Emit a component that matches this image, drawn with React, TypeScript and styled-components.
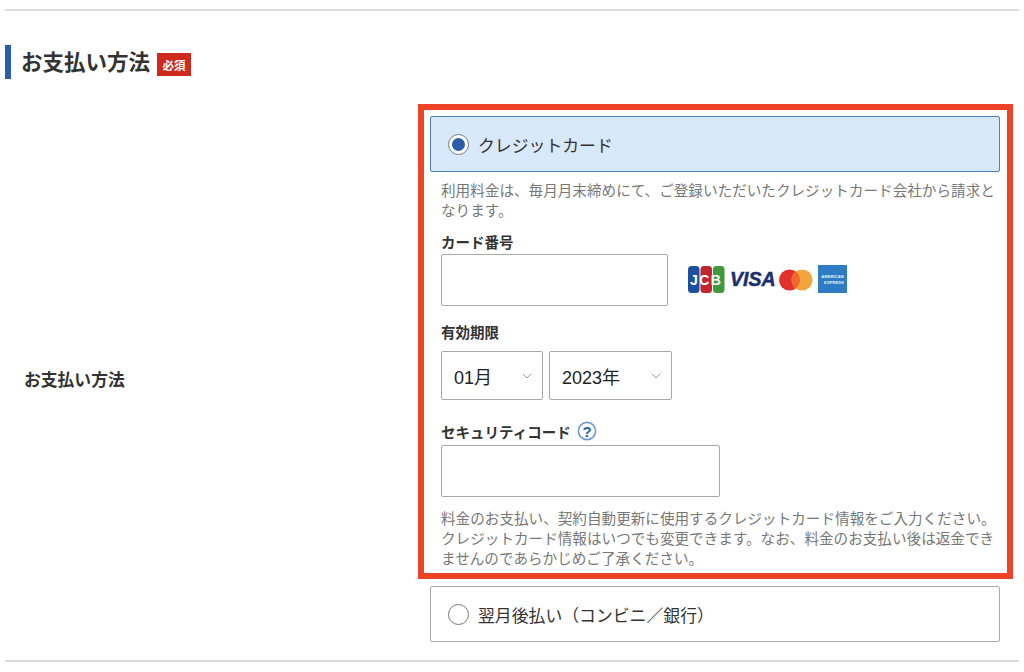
import styled, { createGlobalStyle } from "styled-components";
import { ChevronDown } from "lucide-react";

const GlobalStyle = createGlobalStyle`
  html, body {
    margin: 0;
    padding: 0;
    background: #fff;
  }
  body {
    font-family: "Liberation Sans", "Noto Sans CJK JP", sans-serif;
    color: #333;
  }
  * {
    box-sizing: border-box;
  }
`;

const Page = styled.div`
  width: 1024px;
  height: 672px;
  padding: 9px 5px 0;
  overflow: hidden;
`;

const Rule = styled.hr`
  margin: 0;
  border: 0;
  height: 2px;
  background: #dcdcdc;
`;

const Heading = styled.div`
  display: flex;
  align-items: center;
  gap: 7px;
  height: 34px;
  margin-top: 34px;
  padding-left: 10px;
  border-left: 6px solid #2a5ea8;
`;

const Title = styled.h2`
  margin: 0 0 4px;
  font-size: 21.5px;
  font-weight: 700;
  color: #333;
`;

const Required = styled.span`
  display: flex;
  align-items: center;
  justify-content: center;
  width: 34px;
  height: 23px;
  margin-top: 5px;
  background: #cf2a1e;
  color: #fff;
  font-size: 11.5px;
  font-weight: 700;
`;

const FormRow = styled.div`
  display: flex;
  margin-top: 25px;
`;

const RowLabel = styled.div`
  display: flex;
  align-items: center;
  width: 413px;
  padding: 12px 0 0 19px;
  font-size: 16.8px;
  font-weight: 700;
  color: #333;
`;

const Options = styled.div`
  display: flex;
  flex-direction: column;
  width: 595px;
`;

const Highlight = styled.div`
  height: 475px;
  padding: 6px 7px 0 6px;
  border: 6px solid #ee4326;
`;

const OptionCard = styled.div<{ $selected?: boolean }>`
  display: flex;
  align-items: center;
  gap: 9px;
  width: 570px;
  height: 56px;
  padding-left: 17px;
  border: 1px solid ${(p) => (p.$selected ? "#4f7fbe" : "#a9a9a9")};
  border-radius: 2px;
  background: ${(p) => (p.$selected ? "#d9e9fc" : "#fff")};
  font-size: 16.85px;
  color: #333;
`;

const Radio = styled.span<{ $checked?: boolean }>`
  display: flex;
  align-items: center;
  justify-content: center;
  width: 21px;
  height: 21px;
  border: 1.5px solid #777;
  border-radius: 50%;
  background: #fff;

  &::after {
    content: "";
    display: ${(p) => (p.$checked ? "block" : "none")};
    width: 13px;
    height: 13px;
    border-radius: 50%;
    background: #2a5ea8;
  }
`;

const Body = styled.div`
  padding: 9px 0 0 11px;
`;

const Help = styled.p`
  margin: 0;
  width: 560px;
  font-size: 14.6px;
  line-height: 20px;
  color: #777;
`;

const FieldLabel = styled.div<{ $top: number }>`
  display: flex;
  align-items: center;
  gap: 6px;
  height: 20px;
  margin-top: ${(p) => p.$top}px;
  font-size: 14.5px;
  font-weight: 700;
  color: #333;
`;

const CardRow = styled.div`
  display: flex;
  align-items: center;
  gap: 20px;
  margin-top: 3px;
`;

const TextBox = styled.input<{ $width: number }>`
  display: block;
  width: ${(p) => p.$width}px;
  height: 52px;
  border: 1px solid #a9a9a9;
  border-radius: 2px;
  background: #fff;
`;

const DateRow = styled.div`
  display: flex;
  gap: 6px;
  margin-top: 10px;
`;

const SelectBox = styled.div<{ $width: number }>`
  display: flex;
  align-items: center;
  justify-content: space-between;
  width: ${(p) => p.$width}px;
  height: 49px;
  padding: 0 7px 0 12px;
  border: 1px solid #a9a9a9;
  border-radius: 2px;
  font-size: 18px;
  color: #222;
  svg {
    color: #8a8a8a;
  }
`;

const SecurityBox = styled.div`
  margin-top: 4px;
`;

const Note = styled(Help)`
  margin-top: 12px;
`;

const SecondOption = styled(OptionCard)`
  margin: 7px 0 0 12px;
`;

const BottomRule = styled(Rule)`
  margin-top: 18px;
`;

const Brand = styled.svg`
  display: block;
  flex: none;
`;

function CardBrands() {
  return (
    <Brand width="160" height="30" viewBox="0 0 160 30">
      {/* JCB */}
      <rect x="0" y="1" width="11.5" height="27" rx="3.5" fill="#1d4f9e" />
      <rect x="12.5" y="1" width="11.5" height="27" rx="3.5" fill="#c3252f" />
      <rect x="25" y="1" width="11.5" height="27" rx="3.5" fill="#3d9b3c" />
      <text x="18.2" y="20" textAnchor="middle" fontFamily="Liberation Sans" fontWeight="700" fontSize="14" fill="#fff" letterSpacing="1.5">
        JCB
      </text>
      {/* VISA */}
      <text x="42" y="21" fontFamily="Liberation Sans" fontStyle="italic" fontWeight="700" fontSize="19.5" fill="#1c2f6e" stroke="#1c2f6e" strokeWidth="0.5">
        VISA
      </text>
      {/* Mastercard */}
      <circle cx="101.5" cy="15" r="10.5" fill="#e2322b" />
      <circle cx="114" cy="15" r="10.5" fill="#f2a53a" />
      <path d="M107.75 6.6a10.5 10.5 0 0 1 0 16.8a10.5 10.5 0 0 1 0-16.8z" fill="#f0692c" />
      {/* Amex */}
      <rect x="130" y="0" width="29" height="28" fill="#2d7cc4" />
      <text x="144.5" y="13" textAnchor="middle" fontFamily="Liberation Sans" fontWeight="700" fontSize="4.2" fill="#e4f0fa">
        AMERICAN
      </text>
      <text x="146" y="19" textAnchor="middle" fontFamily="Liberation Sans" fontWeight="700" fontSize="4.2" fill="#e4f0fa">
        EXPRESS
      </text>
    </Brand>
  );
}

function HelpIcon() {
  return (
    <svg width="20" height="20" viewBox="0 0 20 20">
      <circle cx="10" cy="10" r="8.6" fill="#fff" stroke="#6f9bd1" strokeWidth="1.6" />
      <text x="10" y="15.5" textAnchor="middle" fontFamily="Liberation Sans" fontWeight="700" fontSize="15" fill="#2a5ea8">
        ?
      </text>
    </svg>
  );
}

export default function App() {
  return (
    <Page>
      <GlobalStyle />
      <Rule />
      <Heading>
        <Title>お支払い方法</Title>
        <Required>必須</Required>
      </Heading>
      <FormRow>
        <RowLabel>お支払い方法</RowLabel>
        <Options>
          <Highlight>
            <OptionCard $selected>
              <Radio $checked />
              クレジットカード
            </OptionCard>
            <Body>
              <Help>利用料金は、毎月月末締めにて、ご登録いただいたクレジットカード会社から請求となります。</Help>
              <FieldLabel $top={10}>カード番号</FieldLabel>
              <CardRow>
                <TextBox $width={227} />
                <CardBrands />
              </CardRow>
              <FieldLabel $top={15}>有効期限</FieldLabel>
              <DateRow>
                <SelectBox $width={102}>
                  01月
                  <ChevronDown size={16} strokeWidth={1.25} />
                </SelectBox>
                <SelectBox $width={123}>
                  2023年
                  <ChevronDown size={16} strokeWidth={1.25} />
                </SelectBox>
              </DateRow>
              <FieldLabel $top={21}>
                セキュリティコード
                <HelpIcon />
              </FieldLabel>
              <SecurityBox>
                <TextBox $width={279} />
              </SecurityBox>
              <Note>
                料金のお支払い、契約自動更新に使用するクレジットカード情報をご入力ください。クレジットカード情報はいつでも変更できます。なお、料金のお支払い後は返金できませんのであらかじめご了承ください。
              </Note>
            </Body>
          </Highlight>
          <SecondOption>
            <Radio />
            翌月後払い（コンビニ／銀行）
          </SecondOption>
        </Options>
      </FormRow>
      <BottomRule />
    </Page>
  );
}
